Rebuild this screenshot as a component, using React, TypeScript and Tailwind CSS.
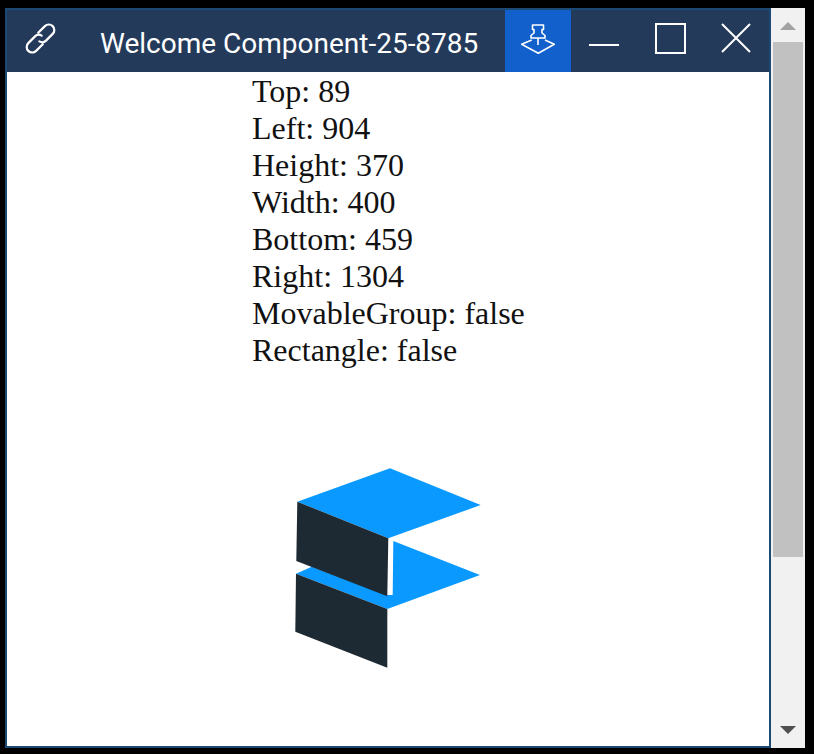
const lines = [
  'Top: 89',
  'Left: 904',
  'Height: 370',
  'Width: 400',
  'Bottom: 459',
  'Right: 1304',
  'MovableGroup: false',
  'Rectangle: false',
];

function LinkIcon() {
  return (
    <svg width="32" height="32" viewBox="0 0 32 32" fill="none" stroke="white" strokeWidth="2.2" strokeLinecap="round" strokeLinejoin="round">
      <path transform="translate(0.6 -1)" d="M13.6 10.8 L20.3 4.1 A5.5 5.5 0 0 1 28.1 11.9 L21.4 18.6 A5.5 5.5 0 0 1 14.75 19.4" />
      <path transform="translate(-0.6 0)" d="M19.4 21.2 L12.7 27.9 A5.5 5.5 0 0 1 4.9 20.1 L11.6 13.4 A5.5 5.5 0 0 1 18.25 12.6" />
    </svg>
  );
}

function PinIcon() {
  return (
    <svg width="36" height="32" viewBox="0 0 36 32" fill="none" stroke="white" strokeWidth="1.6" strokeLinejoin="round">
      <path d="M12.5 2 H23.5 V6.5 H22 V10 L25 12.5 V15 H11 V12.5 L14 10 V6.5 H12.5 Z" />
      <path d="M18 15 V22" />
      <path d="M11.7 17 L1.7 21.3 L18.3 30.3 L34.3 21.3 L25 17" />
    </svg>
  );
}

function Logo() {
  return (
    <svg width="190" height="204" viewBox="293 466 190 204" className="ml-[286px] mt-[97px] block">
      <polygon points="297.3,501.7 390,468.3 480.7,505 388.3,538.3" fill="#0a9aff" />
      <polygon points="393.3,541 480,575 387.3,609 296,573.7 311.7,566.7 387.3,595 392.7,595" fill="#0a9aff" />
      <polygon points="297.3,501.7 388.3,538.3 387.3,596.3 296.3,561" fill="#1e2a33" />
      <polygon points="296,573.7 387.3,609 387.3,667.7 295.3,631.7" fill="#1e2a33" />
    </svg>
  );
}

export default function App() {
  return (
    <div className="flex h-[754px] w-[814px] overflow-hidden bg-black pl-[5px] pt-2 pr-[9px] pb-1.5">
      <div className="flex h-full w-[766px] flex-col border-2 border-[#1c4a75] bg-white">
        <header className="flex h-[62px] shrink-0 items-center bg-[#243a5a] text-white">
          <div className="flex w-[66px] justify-center pb-[4px]">
            <LinkIcon />
          </div>
          <h1 className="ml-[27px] mt-[6px] w-[405px] whitespace-nowrap font-['Roboto',sans-serif] text-[28px] font-normal">
            Welcome Component-25-8785
          </h1>
          <button className="flex h-full w-[66px] items-center justify-center bg-[#1160cc] pb-[4px]">
            <PinIcon />
          </button>
          <button className="ml-[18px] flex h-full w-[30px] items-center justify-center pt-[6px]">
            <span className="mt-[2px] block h-[2px] w-[30px] bg-white" />
          </button>
          <div className="ml-[36px] mb-[6px] h-[31px] w-[31px] border-2 border-white" />
          <svg width="30" height="30" viewBox="0 0 30 30" className="ml-[35px] mb-[6px]" stroke="white" strokeWidth="2">
            <path d="M1 1 L29 29 M29 1 L1 29" />
          </svg>
        </header>
        <main className="flex-1">
          <div className="ml-[245px] mt-[1px] font-['Liberation_Serif',serif] text-[32px] leading-[37px] text-[#111]">
            {lines.map((l) => (
              <div key={l}>{l}</div>
            ))}
          </div>
          <Logo />
        </main>
      </div>
      <div className="flex h-full w-[34px] flex-col items-center bg-[#f1f1f1]">
        <div className="mt-[14px] h-0 w-0 border-x-[8px] border-b-[8px] border-x-transparent border-b-[#a3a3a3]" />
        <div className="mt-[12px] h-[515px] w-[30px] bg-[#c1c1c1]" />
        <div className="mt-[169px] h-0 w-0 border-x-[8px] border-t-[8px] border-x-transparent border-t-[#505050]" />
      </div>
    </div>
  );
}
